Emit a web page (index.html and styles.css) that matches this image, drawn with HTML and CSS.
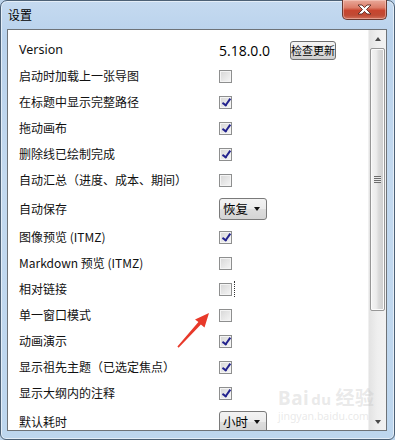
FILE: index.html
```html
<!DOCTYPE html>
<html lang="zh">
<head>
<meta charset="utf-8">
<title>设置</title>
<link rel="stylesheet" href="styles.css">
</head>
<body>
<div class="window">
  <div class="titlebar">
    <span class="title">设置</span>
    <div class="close">
      <svg width="17" height="11" viewBox="0 0 17 11"><path d="M2 1h4l2.5 2.6L11 1h4l-4.5 4.5L15 10h-4L8.5 7.4 6 10H2l4.5-4.5z" fill="#fff" stroke="#5a2a22" stroke-width="0.9" stroke-linejoin="round"/></svg>
    </div>
  </div>
  <div class="panel">
    <div class="content">
      <div class="row"><span class="label ver">Version</span><div class="ctrl"><span class="vnum">5.18.0.0</span><button class="btn">检查更新</button></div></div>
      <div class="row"><span class="label">启动时加载上一张导图</span><div class="ctrl"><span class="cb"></span></div></div>
      <div class="row"><span class="label">在标题中显示完整路径</span><div class="ctrl"><span class="cb on"></span></div></div>
      <div class="row"><span class="label">拖动画布</span><div class="ctrl"><span class="cb on"></span></div></div>
      <div class="row"><span class="label">删除线已绘制完成</span><div class="ctrl"><span class="cb on"></span></div></div>
      <div class="row"><span class="label">自动汇总（进度、成本、期间）</span><div class="ctrl"><span class="cb"></span></div></div>
      <div class="row tall"><span class="label">自动保存</span><div class="ctrl"><span class="combo">恢复<i class="tri"></i></span></div></div>
      <div class="row"><span class="label">图像预览 (ITMZ)</span><div class="ctrl"><span class="cb on"></span></div></div>
      <div class="row"><span class="label">Markdown 预览 (ITMZ)</span><div class="ctrl"><span class="cb"></span></div></div>
      <div class="row"><span class="label">相对链接</span><div class="ctrl"><span class="cb"></span><span class="focus"></span></div></div>
      <div class="row"><span class="label">单一窗口模式</span><div class="ctrl"><span class="cb"></span></div></div>
      <div class="row"><span class="label">动画演示</span><div class="ctrl"><span class="cb on"></span></div></div>
      <div class="row"><span class="label">显示祖先主题（已选定焦点）</span><div class="ctrl"><span class="cb on"></span></div></div>
      <div class="row"><span class="label">显示大纲内的注释</span><div class="ctrl"><span class="cb on"></span></div></div>
      <div class="row tall"><span class="label">默认耗时</span><div class="ctrl"><span class="combo">小时<i class="tri"></i></span></div></div>
    </div>
    <div class="scrollbar">
      <div class="sbtn"><i class="up"></i></div>
      <div class="thumb"><span class="grip"></span></div>
      <div class="sfill"></div>
      <div class="sbtn"><i class="down"></i></div>
    </div>
  </div>
  <svg class="arrow" width="395" height="440" viewBox="0 0 395 440"><polygon points="209,313 204.5,327.5 200.9,324.6 178.6,347.8 177.4,346.6 198.4,322.1 195,319.5" fill="#e8392a"/></svg>
  <div class="watermark">
    <div class="wm1">Bai<span class="paw">du</span>经验</div>
    <div class="wm2">jingyan.baidu.com</div>
  </div>
</div>
</body>
</html>
```

FILE: styles.css
```css
html, body { margin: 0; padding: 0; background: #bcd3ea; }
body { width: 395px; height: 440px; overflow: hidden; font-family: "Noto Sans", "Noto Sans CJK SC", sans-serif; }

.window {
  position: relative;
  box-sizing: border-box;
  width: 395px;
  height: 440px;
  border: 1px solid #4d6176;
  border-radius: 7px 7px 6px 6px;
  background: linear-gradient(180deg, #c5daf0 0%, #b9d2ec 8%, #c3d9ef 40%, #bdd6ee 100%);
  padding: 0 7px 8px 6px;
  box-shadow: inset 0 0 0 1px #e4eef8;
}

.titlebar {
  height: 28px;
  display: flex;
  justify-content: space-between;
  align-items: flex-start;
}
.title {
  font-family: "Noto Sans CJK SC", sans-serif;
  font-size: 12px;
  line-height: 12px;
  color: #000;
  margin-top: 8px;
  padding-left: 1px;
}
.close {
  box-sizing: border-box;
  width: 45px;
  height: 20px;
  margin-top: -1px;
  border: 1px solid #6a3a32;
  border-top: none;
  border-radius: 0 0 5px 5px;
  background: linear-gradient(180deg, #e9a99a 0%, #dc7d69 40%, #c8452f 55%, #c04a34 80%, #d0705b 100%);
  box-shadow: inset 0 0 0 1px rgba(255,220,210,0.45);
  display: flex;
  align-items: center;
  justify-content: center;
}
.close svg { display: block; }

.panel {
  box-sizing: border-box;
  height: 402px;
  border: 1px solid #6e7378;
  background: #fff;
  display: flex;
}

.content {
  flex: 1;
  padding: 7px 0 0 11px;
  font-family: "Noto Sans CJK SC", sans-serif;
  font-size: 12px;
  color: #111;
  overflow: hidden;
}
.row {
  height: 26px;
  display: grid;
  grid-template-columns: 200px auto;
  align-items: center;
}
.row.tall { height: 31px; }
.label { white-space: nowrap; line-height: 14px; }
.label.ver { font-family: "Noto Sans", sans-serif; font-size: 12.5px; }
.ctrl { display: flex; align-items: center; }

.vnum { font-family: "Open Sans", "Noto Sans", sans-serif; font-size: 14px; font-weight: 400; color: #000; width: 71px; }
.btn {
  box-sizing: border-box;
  width: 46px;
  height: 19px;
  padding: 0;
  border: 1px solid #707070;
  border-radius: 3px;
  background: linear-gradient(180deg, #f4f4f4 0%, #ebebeb 48%, #dddddd 52%, #cfcfcf 100%);
  font-family: "Noto Sans CJK SC", sans-serif;
  font-size: 11px;
  line-height: 17px;
  color: #000;
}

.cb {
  position: relative;
  box-sizing: border-box;
  width: 13px;
  height: 13px;
  border: 1px solid #8e8f8f;
  background: linear-gradient(135deg, #d6d6d6 0%, #e9e9e9 60%, #f6f6f6 100%);
  box-shadow: inset 0 0 0 1px #f4f4f4;
}
.cb.on::after {
  content: "";
  position: absolute;
  left: 4px;
  top: 0px;
  width: 3px;
  height: 7px;
  border: solid #23238e;
  border-width: 0 2px 2px 0;
  transform: rotate(35deg);
}
.focus {
  width: 1px;
  height: 16px;
  margin-left: 1px;
  border-right: 1px dotted #333;
}

.combo {
  position: relative;
  box-sizing: border-box;
  width: 48px;
  height: 22px;
  border: 1px solid #7a7a7a;
  border-radius: 3px;
  background: linear-gradient(180deg, #f3f3f3 0%, #ebebeb 50%, #dddddd 51%, #d4d4d4 100%);
  padding-left: 3px;
  font-size: 12.5px;
  line-height: 20px;
  color: #000;
}
.tri {
  position: absolute;
  right: 6px;
  top: 8px;
  width: 0;
  height: 0;
  border-left: 3.5px solid transparent;
  border-right: 3.5px solid transparent;
  border-top: 4px solid #111;
}

.scrollbar {
  width: 17px;
  display: flex;
  flex-direction: column;
  background: linear-gradient(90deg, #e3e3e3 0%, #efefef 50%, #f2f2f2 100%);
  border-left: 1px solid #f0f0f0;
}
.sbtn {
  height: 17px;
  display: flex;
  align-items: center;
  justify-content: center;
}
.up, .down { width: 0; height: 0; border-left: 3.5px solid transparent; border-right: 3.5px solid transparent; }
.up { border-bottom: 4px solid #4a4a4a; }
.down { border-top: 4px solid #4a4a4a; }
.thumb {
  box-sizing: border-box;
  height: 263px;
  margin: 1px 1px 0 1px;
  border: 1px solid #979797;
  border-radius: 2px;
  background: linear-gradient(90deg, #f4f4f4 0%, #ececec 40%, #dadada 60%, #cdcdcd 100%);
  box-shadow: inset 0 0 0 1px #fbfbfb;
  display: flex;
  align-items: center;
  justify-content: center;
}
.grip {
  width: 7px;
  height: 7px;
  background: repeating-linear-gradient(180deg, #6d6d6d 0 1px, #eaeaea 1px 2px);
}
.sfill { flex: 1; }

.arrow { position: absolute; left: -1px; top: -1px; pointer-events: none; }

.watermark {
  position: absolute;
  left: 277px;
  top: 386px;
  color: rgba(200,200,200,0.4);
  pointer-events: none;
}
.wm1 { font-family: "Noto Sans", "Noto Sans CJK SC", sans-serif; font-size: 19px; font-weight: 700; line-height: 22px; letter-spacing: 0.5px; }
.paw { font-size: 15px; margin: 0 4px 0 2px; }
.wm2 { font-family: "Noto Sans", sans-serif; font-size: 10.5px; line-height: 12px; }
```
